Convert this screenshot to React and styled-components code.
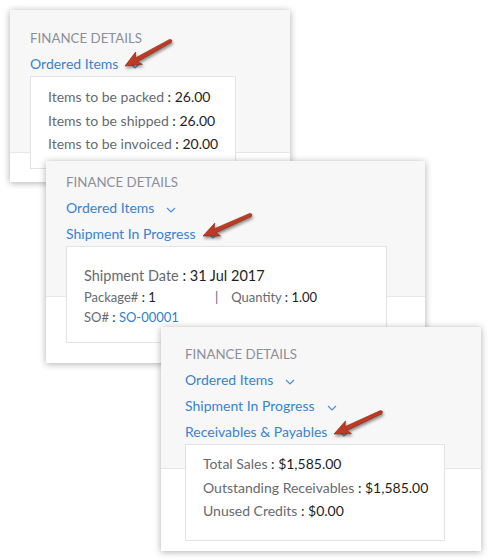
import styled, { createGlobalStyle } from 'styled-components';

const GlobalStyle = createGlobalStyle`
    html, body {
        margin: 0;
        padding: 0;
        background: #ffffff;
    }
    body {
        font-family: Lato, "Open Sans", Arial, sans-serif;
        -webkit-font-smoothing: antialiased;
    }
`;

function Chevron() {
    return (
        <svg width="10" height="6" viewBox="0 0 10 6">
            <path d="M1 1 L5 5 L9 1" fill="none" stroke="#4a8fd4" strokeWidth="1.2" />
        </svg>
    );
}

function Arrow({ angle }) {
    return (
        <ArrowSvg width="64" height="40" viewBox="0 0 64 40">
            <g transform={`translate(4 33) rotate(${-angle})`}>
                <polygon
                    points="0,0 16,-7 13,-2 52,-1.6 53.5,0 52,1.8 13,2.3 16,7"
                    fill="#bf3a24"
                    stroke="#93260f"
                    strokeWidth="0.6"
                    strokeLinejoin="round"
                />
            </g>
        </ArrowSvg>
    );
}

function LinkRow({ label, arrow }) {
    return (
        <Row>
            <Link>{label}</Link>
            <ChevronWrap>
                <Chevron />
                {arrow && <Arrow angle={arrow} />}
            </ChevronWrap>
        </Row>
    );
}

function Stat({ label, value }) {
    return (
        <StatRow>
            <Label>{label}</Label> : {value}
        </StatRow>
    );
}

export default function App() {
    return (
        <>
            <GlobalStyle />
            <Page>
                <Panel $left={10} $top={10} $w={280} $h={172} $pt={15} $pl={20} $split={142}>
                    <Heading>Finance Details</Heading>
                    <LinkRow label="Ordered Items" arrow={29} />
                    <Box $w={206} $h={93} $pt={8}>
                        <Stat label="Items to be packed" value="26.00" />
                        <Stat label="Items to be shipped" value="26.00" />
                        <Stat label="Items to be invoiced" value="20.00" />
                    </Box>
                </Panel>

                <Panel $left={46} $top={-21} $w={379} $h={202} $pt={8} $pl={20} $split={135}>
                    <Heading>Finance Details</Heading>
                    <LinkRow label="Ordered Items" />
                    <LinkRow label="Shipment In Progress" arrow={24} />
                    <Box $w={321} $h={97} $pt={18}>
                        <BigLine>
                            <Label>Shipment Date</Label> : 31 Jul 2017
                        </BigLine>
                        <SmallLine>
                            <Cell>
                                <Label>Package#</Label> : 1
                            </Cell>
                            <Divider>|</Divider>
                            <span>
                                <Label>Quantity</Label> : 1.00
                            </span>
                        </SmallLine>
                        <SmallLine>
                            <Label>SO#</Label> :&nbsp;<SoLink>SO-00001</SoLink>
                        </SmallLine>
                    </Box>
                </Panel>

                <Panel $left={161} $top={-36} $w={320} $h={224} $pt={14} $pl={24} $split={141}>
                    <Heading>Finance Details</Heading>
                    <LinkRow label="Ordered Items" />
                    <LinkRow label="Shipment In Progress" />
                    <LinkRow label="Receivables & Payables" arrow={25} />
                    <Box $w={260} $h={97} $pt={7}>
                        <Stat label="Total Sales" value="$1,585.00" />
                        <Stat label="Outstanding Receivables" value="$1,585.00" />
                        <Stat label="Unused Credits" value="$0.00" />
                    </Box>
                </Panel>
            </Page>
        </>
    );
}

const Page = styled.div`
    width: 493px;
    height: 560px;
    overflow: hidden;
    display: flex;
    flex-direction: column;
    align-items: flex-start;
`;

const Panel = styled.section`
    position: relative;
    box-sizing: border-box;
    flex: none;
    width: ${(p) => p.$w}px;
    height: ${(p) => p.$h}px;
    margin-left: ${(p) => p.$left}px;
    margin-top: ${(p) => p.$top}px;
    padding: ${(p) => p.$pt}px 0 0 ${(p) => p.$pl}px;
    background: linear-gradient(
        to bottom,
        #f7f7f7 0,
        #f7f7f7 ${(p) => p.$split}px,
        #e6e6e6 ${(p) => p.$split}px,
        #e6e6e6 ${(p) => p.$split + 1}px,
        #ffffff ${(p) => p.$split + 1}px
    );
    box-shadow: 0 1px 7px rgba(0, 0, 0, 0.32);
    overflow: hidden;
`;

const Heading = styled.div`
    height: 26px;
    line-height: 26px;
    font-size: 13.3px;
    text-transform: uppercase;
    color: #8b8f99;
`;

const Row = styled.div`
    height: 26px;
    display: flex;
    align-items: center;
    gap: 12px;
`;

const Link = styled.span`
    font-size: 14px;
    line-height: 26px;
    color: #3783cf;
`;

const ChevronWrap = styled.span`
    position: relative;
    display: flex;
    width: 10px;
    height: 6px;
    margin-top: 3px;
`;

const ArrowSvg = styled.svg`
    position: absolute;
    left: -9px;
    top: -30px;
    overflow: visible;
    filter: drop-shadow(1px 2px 1.5px rgba(0, 0, 0, 0.45));
`;

const Box = styled.div`
    box-sizing: border-box;
    width: ${(p) => p.$w}px;
    height: ${(p) => p.$h}px;
    margin-top: -1px;
    padding: ${(p) => p.$pt}px 0 0 17px;
    background: #ffffff;
    border: 1px solid #e3e3e3;
    color: #222;
`;

const StatRow = styled.div`
    font-size: 14px;
    line-height: 23.5px;
    color: #1e1e1e;
`;

const Label = styled.span`
    color: #666a70;
`;

const BigLine = styled.div`
    font-size: 14.5px;
    line-height: 22px;
    color: #1e1e1e;
`;

const SmallLine = styled.div`
    display: flex;
    align-items: baseline;
    font-size: 13px;
    line-height: 20px;
    color: #1e1e1e;
    white-space: pre;
`;

const Cell = styled.span`
    width: 131px;
`;

const Divider = styled.span`
    color: #666;
    margin-right: 13px;
`;

const SoLink = styled.span`
    color: #2f7fd0;
`;
